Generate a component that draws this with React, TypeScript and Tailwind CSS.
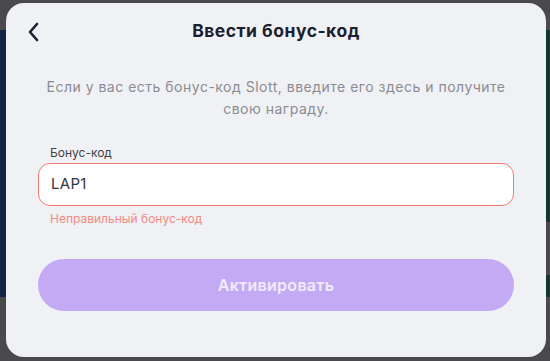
import React from "react";

export default function App() {
  const font = { fontFamily: "Inter, 'Noto Sans', sans-serif" };
  return (
    <div className="relative w-[550px] h-[361px] overflow-hidden bg-[#4a4a4c]" style={font}>
      {/* blurred background page */}
      <div className="flex flex-col h-full">
        <div className="h-[30px] bg-[#4a4a4c]" />
        <div className="flex h-[267px]">
          <div className="w-[275px] bg-[#12234a]" />
          <div className="flex-1 flex flex-col">
            <div className="h-[192px] bg-[#14372e]" />
            <div className="h-[53px] bg-[#4a4a4c]" />
            <div className="flex-1 bg-[#14372e]" />
          </div>
        </div>
        <div className="flex-1 bg-[#4a4a4c]" />
      </div>

      {/* modal */}
      <div className="absolute left-[6px] top-[3px] w-[540px] h-[354px] rounded-[18px] bg-[#f0f1f5] flex flex-col px-[32px]">
        <div className="relative flex items-center justify-center h-[56px] pt-[1px]">
          <button className="absolute left-[-16px] top-[17px] w-[24px] h-[24px] flex items-center justify-center">
            <svg width="14" height="22" viewBox="0 0 14 22" fill="none">
              <path d="M10 3 L3 11 L10 19" stroke="#1b2030" strokeWidth="2.6" strokeLinecap="round" strokeLinejoin="round" />
            </svg>
          </button>
          <h1 className="text-[17.5px] font-bold text-[#1b2030] tracking-[0.5px]">Ввести бонус-код</h1>
        </div>
        <p className="mt-[17px] text-center text-[14px] leading-[22px] text-[#8b8c92] tracking-[0.5px]">
          Если у вас есть бонус-код Slott, введите его здесь и получите свою награду.
        </p>
        <label className="mt-[25px] ml-[12px] text-[12px] leading-[16px] text-[#3f4148]">Бонус-код</label>
        <div className="mt-[2px] h-[43px] rounded-[12px] border border-[#f47a70] bg-white flex items-center px-[12px]">
          <span className="text-[15px] text-[#34363c] tracking-[0.3px]">LAP1</span>
        </div>
        <div className="mt-[5px] ml-[12px] text-[12px] leading-[16px] text-[#f28a82]">Неправильный бонус-код</div>
        <button className="mt-[32px] h-[52px] rounded-full bg-[#c4aaf5] flex items-center justify-center">
          <span className="text-[16px] font-semibold text-[#f1ebfd] tracking-[0.3px]">Активировать</span>
        </button>
      </div>
    </div>
  );
}
